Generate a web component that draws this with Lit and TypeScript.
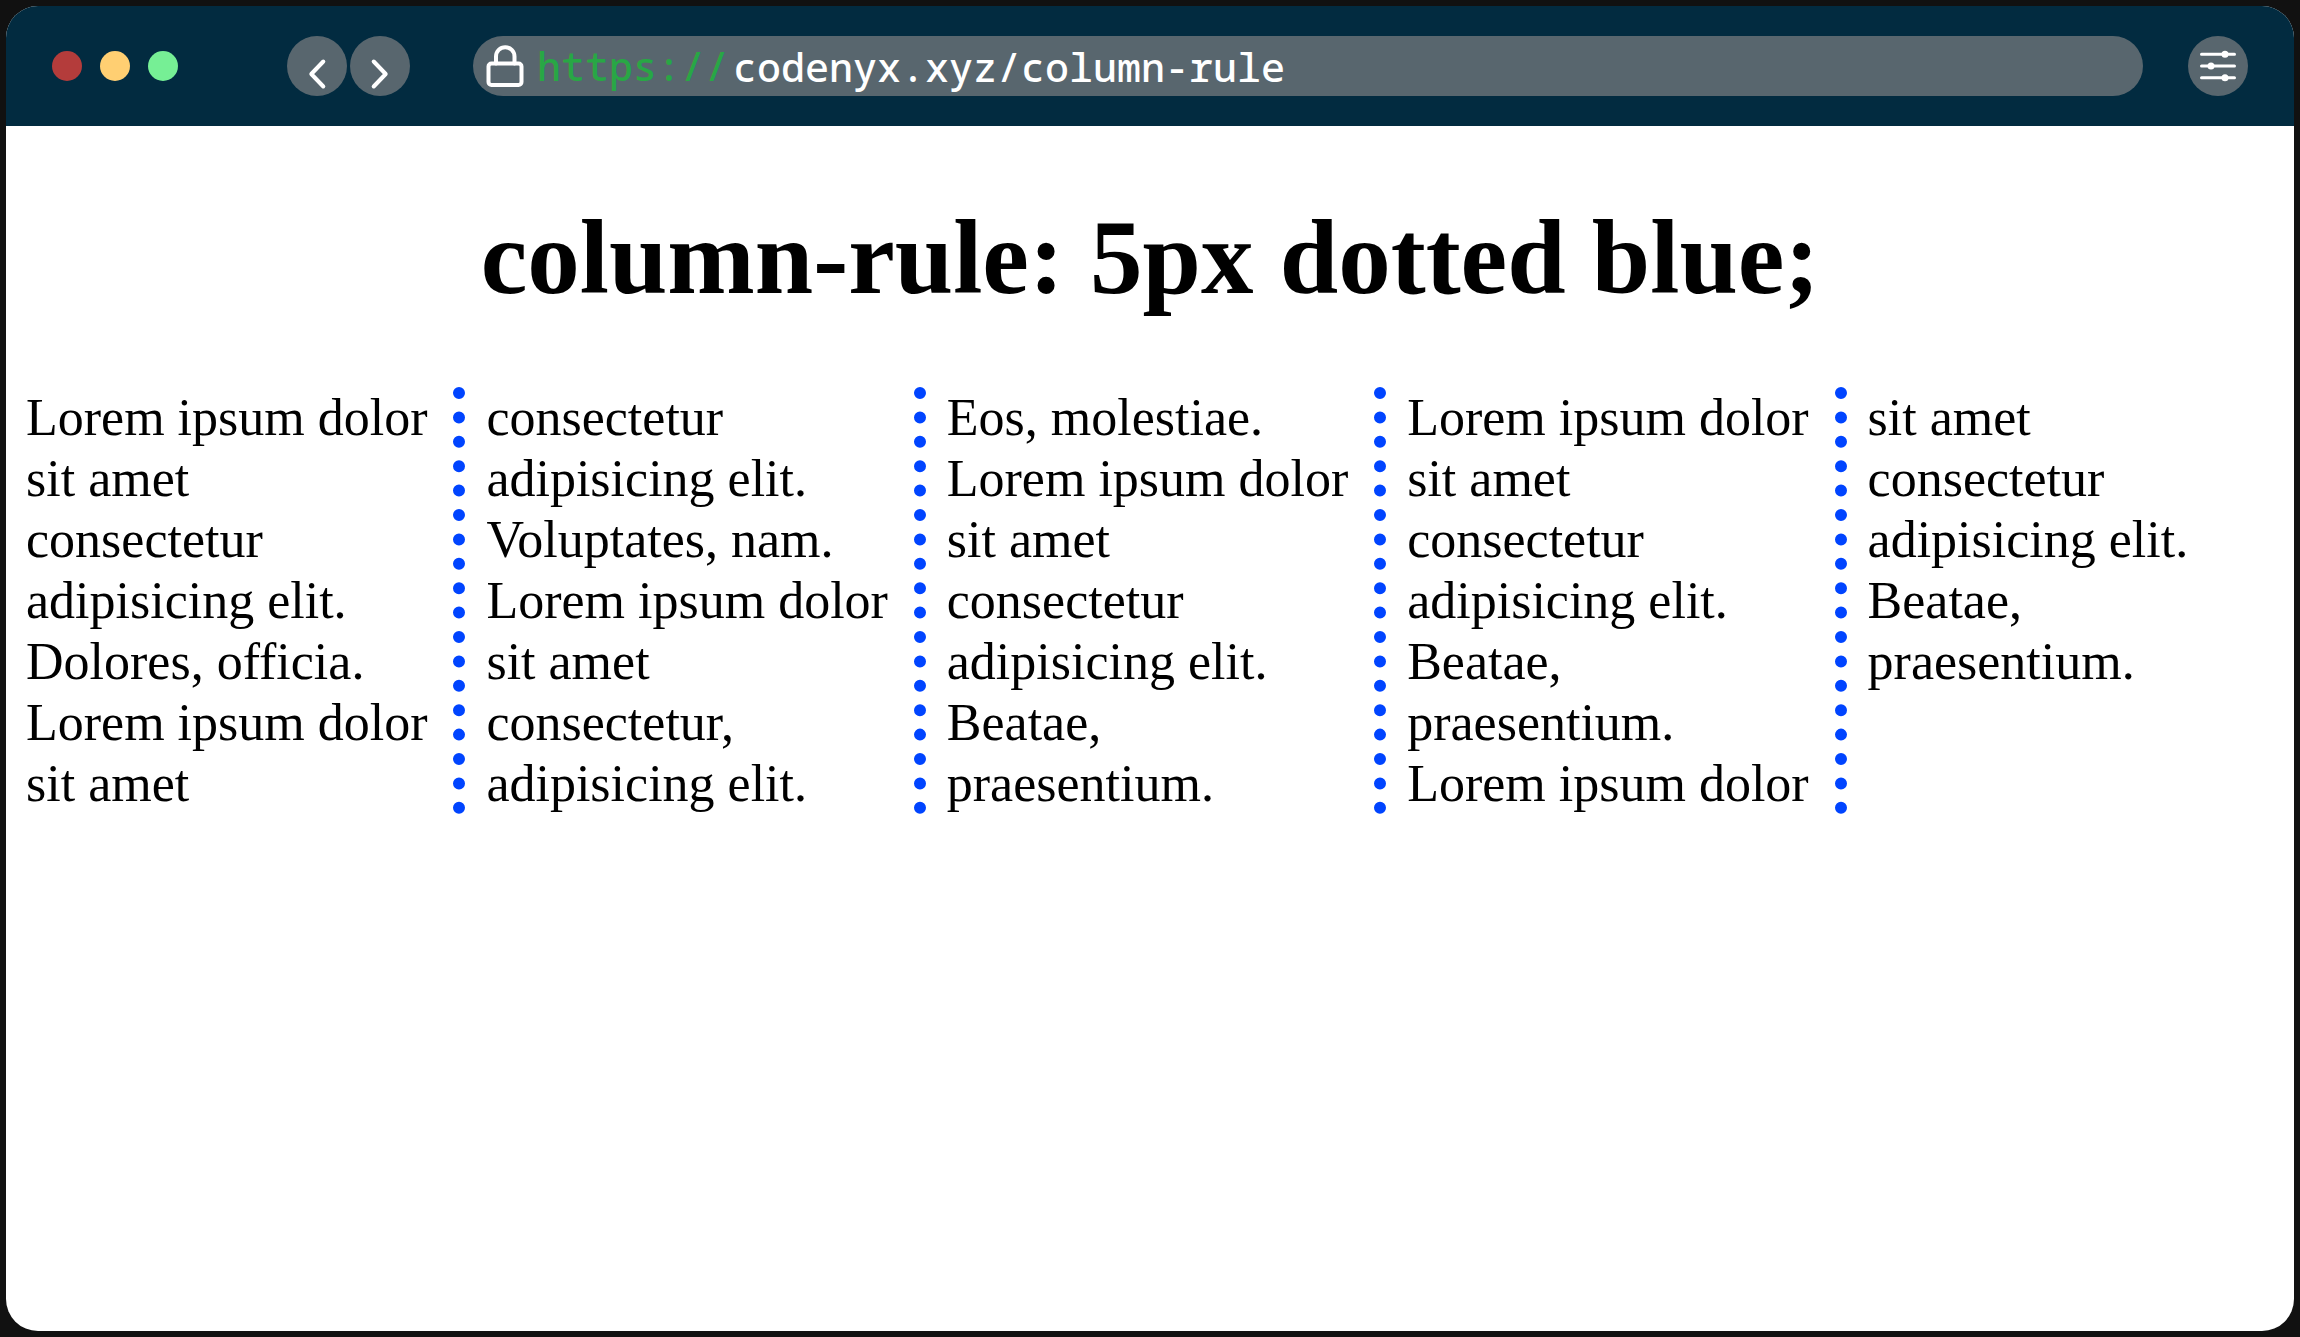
import { LitElement, html, css } from "lit";
import { customElement } from "lit/decorators.js";

@customElement("browser-bar")
class BrowserBar extends LitElement {
  static styles = css`
    :host {
      display: block;
    }
    .bar {
      display: flex;
      align-items: center;
      height: 120px;
      padding: 0 46px;
      box-sizing: border-box;
      background: #022b40;
    }
    .lights {
      display: flex;
      gap: 18px;
      margin-right: 109px;
    }
    .light {
      width: 30px;
      height: 30px;
      border-radius: 50%;
    }
    .red {
      background: #b43c3b;
    }
    .yellow {
      background: #ffcf72;
    }
    .green {
      background: #76ef95;
    }
    .nav {
      display: flex;
      gap: 3px;
      margin-right: 63px;
    }
    .round {
      width: 60px;
      height: 60px;
      padding: 0;
      border: 0;
      border-radius: 50%;
      background: #58666e;
      cursor: pointer;
    }
    .icon {
      display: block;
      fill: none;
      stroke: #fff;
      stroke-width: 4;
      stroke-linecap: round;
      stroke-linejoin: round;
    }
    .address {
      display: flex;
      align-items: center;
      flex: 1;
      min-width: 0;
      height: 60px;
      margin-right: 45px;
      padding: 0 30px 0 12px;
      box-sizing: border-box;
      border-radius: 30px;
      background: #58666e;
    }
    .scheme,
    .url {
      font: 500 40px/48px "Noto Sans Mono", "Liberation Mono", monospace;
    }
    .scheme {
      margin: 0 4px 0 12px;
      color: #28a745;
    }
    .url {
      flex: 1;
      min-width: 0;
      height: 56px;
      padding: 0;
      border: 0;
      outline: 0;
      background: none;
      color: #fff;
    }
    .knob {
      fill: #fff;
      stroke: none;
    }
    .thin {
      stroke-width: 3;
    }
  `;

  render() {
    return html`
      <header class="bar">
        <div class="lights">
          <span class="light red"></span>
          <span class="light yellow"></span>
          <span class="light green"></span>
        </div>
        <nav class="nav">
          <button class="round" aria-label="Back">
            <svg class="icon" width="60" height="60" viewBox="0 0 60 60">
              <path d="M36.3 25.5 24.3 38l12 12.5" />
            </svg>
          </button>
          <button class="round" aria-label="Forward">
            <svg class="icon" width="60" height="60" viewBox="0 0 60 60">
              <path d="M23.7 25.5 35.7 38l-12 12.5" />
            </svg>
          </button>
        </nav>
        <div class="address">
          <svg class="icon" width="40" height="44" viewBox="0 0 40 44">
            <path d="M11 19.500v-7a9.200 9.200 0 0 1 18.500 0v7" />
            <rect x="3.500" y="19.500" width="33" height="21.500" rx="3" />
          </svg>
          <label class="scheme" for="url">https://</label>
          <input class="url" id="url" type="text" value="codenyx.xyz/column-rule" spellcheck="false" />
        </div>
        <button class="round" aria-label="Settings">
          <svg class="icon thin" width="60" height="60" viewBox="0 0 60 60">
            <path d="M13.500 18.300h33M13.500 30h33M13.500 41.700h33" />
            <circle class="knob" cx="37" cy="18.300" r="3.500" />
            <circle class="knob" cx="23" cy="30" r="3.500" />
            <circle class="knob" cx="37" cy="41.700" r="3.500" />
          </svg>
        </button>
      </header>
    `;
  }
}

@customElement("app-root")
class AppRoot extends LitElement {
  static styles = css`
    :host {
      display: flex;
      min-height: 100vh;
      padding: 6px;
      box-sizing: border-box;
      background: #111;
    }
    .window {
      flex: 1;
      min-width: 0;
      overflow: hidden;
      border-radius: 32px;
      background: #fff;
    }
    .page {
      padding: 72px 20px;
      color: #000;
      font-family: "Liberation Serif", "Times New Roman", serif;
    }
    .title {
      margin: 0 0 69px;
      font-size: 105px;
      line-height: 120px;
      font-weight: 700;
      text-align: center;
    }
    .text {
      margin: 0;
      columns: 5;
      column-gap: 54px;
      column-rule: 12px dotted #0044ff;
      font-size: 52px;
      line-height: 61px;
      orphans: 1;
      widows: 1;
    }
  `;

  render() {
    return html`
      <div class="window">
        <browser-bar></browser-bar>
        <main class="page">
          <h1 class="title">column-rule: 5px dotted blue;</h1>
          <p class="text">
            Lorem ipsum dolor sit amet consectetur adipisicing elit. Dolores, officia.
            Lorem ipsum dolor sit amet consectetur adipisicing elit. Voluptates, nam.
            Lorem ipsum dolor sit amet consectetur, adipisicing elit. Eos, molestiae.
            Lorem ipsum dolor sit amet consectetur adipisicing elit. Beatae, praesentium.
            Lorem ipsum dolor sit amet consectetur adipisicing elit. Beatae, praesentium.
            Lorem ipsum dolor sit amet consectetur adipisicing elit. Beatae, praesentium.
          </p>
        </main>
      </div>
    `;
  }
}
